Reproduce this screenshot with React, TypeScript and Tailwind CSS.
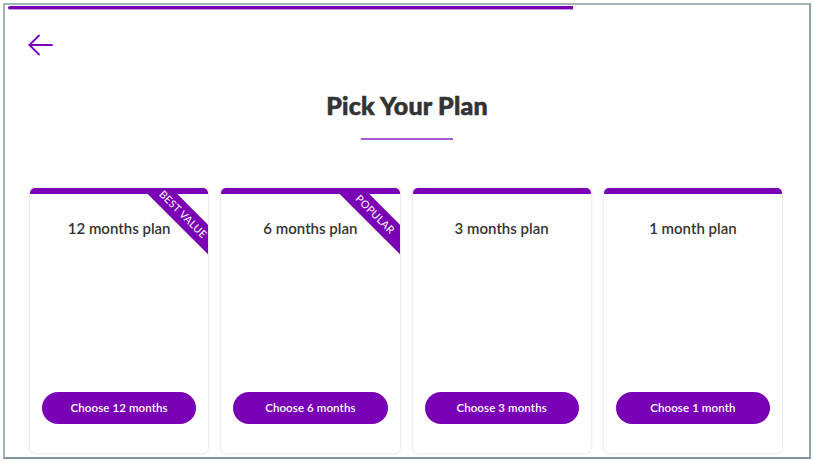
import React from "react";

const PURPLE = "#7a00b5";

function Ribbon({ label }: { label: string }) {
  return (
    <div className="absolute right-[-25px] top-[16px] w-[100px] h-[21px] rotate-45 bg-[#7a00b5] flex items-center justify-center text-white text-[10.5px] leading-none tracking-[0.3px] uppercase">
      {label}
    </div>
  );
}

function Card({ title, cta, ribbon }: { title: string; cta: string; ribbon?: string }) {
  return (
    <div className="relative h-[265px] rounded-[5px] bg-white overflow-hidden shadow-[0_0_3px_rgba(0,0,0,0.18)] flex flex-col">
      <div className="h-[6px] bg-[#7a00b5] shrink-0" />
      {ribbon && <Ribbon label={ribbon} />}
      <div className="pt-[24px] text-center text-[15px] leading-[20px] font-semibold text-[#333]">{title}</div>
      <div className="flex-1" />
      <div className="px-[12px] pb-[29px]">
        <button className="w-full h-[32px] rounded-full bg-[#7a00b5] text-white text-[11.5px] font-semibold tracking-[0.1px]">
          {cta}
        </button>
      </div>
    </div>
  );
}

export default function App() {
  return (
    <div className="w-[814px] h-[462px] bg-white p-[3px]" style={{ fontFamily: "Lato, 'Open Sans', sans-serif" }}>
      <div className="h-full border-2 border-[#a3b4bc] border-r-[#8fa2ab] border-b-[#7f949e] flex flex-col">
        <div className="mt-[1px] ml-[3px] w-[565px] h-[3px] rounded-l-full bg-[#7a00b5] border-b border-[#c99be3] box-content" />
        <div className="mt-[23px] ml-[22px]">
          <svg width="28" height="24" viewBox="0 0 28 24" fill="none" stroke={PURPLE} strokeWidth="1.8" strokeLinecap="round" strokeLinejoin="round">
            <path d="M25 12 H2.5" />
            <path d="M12 2.5 L2.5 12 L12 21.5" />
          </svg>
        </div>
        <div className="mt-[33px] text-center text-[25px] leading-[30px] font-black tracking-[0.2px] text-[#333] [-webkit-text-stroke:0.6px_#333]">Pick Your Plan</div>
        <div className="mt-[18px] mx-auto w-[92px] h-[2px] bg-[#a65cd4]" />
        <div className="mt-[48px] pl-[25px] pr-[27px] grid grid-cols-4 gap-[13px]">
          <Card title="12 months plan" cta="Choose 12 months" ribbon="Best Value" />
          <Card title="6 months plan" cta="Choose 6 months" ribbon="Popular" />
          <Card title="3 months plan" cta="Choose 3 months" />
          <Card title="1 month plan" cta="Choose 1 month" />
        </div>
      </div>
    </div>
  );
}
